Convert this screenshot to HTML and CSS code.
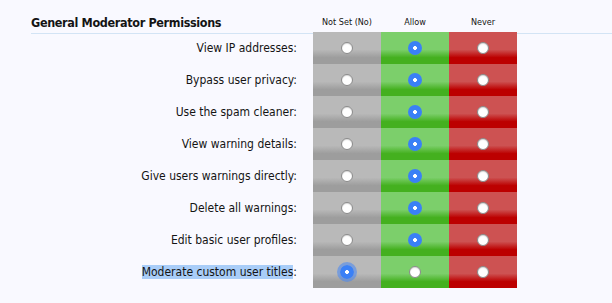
FILE: index.html
```html
<!DOCTYPE html>
<html lang="en">
<head>
    <meta charset="UTF-8">
    <title>General Moderator Permissions</title>
    <link rel="stylesheet" href="styles.css">
</head>
<body>
    <div class="perm-block">
        <div class="perm-grid">
            <h3 class="perm-title">General Moderator Permissions</h3>
            <div class="col-head">Not Set (No)</div>
            <div class="col-head">Allow</div>
            <div class="col-head">Never</div>
            <div class="head-fill"></div>

            <label class="perm-label">View IP addresses:</label>
            <div class="cell unset"><input type="radio" name="p1"></div>
            <div class="cell allow"><input type="radio" name="p1" checked></div>
            <div class="cell never"><input type="radio" name="p1"></div>
            <div></div>

            <label class="perm-label">Bypass user privacy:</label>
            <div class="cell unset"><input type="radio" name="p2"></div>
            <div class="cell allow"><input type="radio" name="p2" checked></div>
            <div class="cell never"><input type="radio" name="p2"></div>
            <div></div>

            <label class="perm-label">Use the spam cleaner:</label>
            <div class="cell unset"><input type="radio" name="p3"></div>
            <div class="cell allow"><input type="radio" name="p3" checked></div>
            <div class="cell never"><input type="radio" name="p3"></div>
            <div></div>

            <label class="perm-label">View warning details:</label>
            <div class="cell unset"><input type="radio" name="p4"></div>
            <div class="cell allow"><input type="radio" name="p4" checked></div>
            <div class="cell never"><input type="radio" name="p4"></div>
            <div></div>

            <label class="perm-label">Give users warnings directly:</label>
            <div class="cell unset"><input type="radio" name="p5"></div>
            <div class="cell allow"><input type="radio" name="p5" checked></div>
            <div class="cell never"><input type="radio" name="p5"></div>
            <div></div>

            <label class="perm-label">Delete all warnings:</label>
            <div class="cell unset"><input type="radio" name="p6"></div>
            <div class="cell allow"><input type="radio" name="p6" checked></div>
            <div class="cell never"><input type="radio" name="p6"></div>
            <div></div>

            <label class="perm-label">Edit basic user profiles:</label>
            <div class="cell unset"><input type="radio" name="p7"></div>
            <div class="cell allow"><input type="radio" name="p7" checked></div>
            <div class="cell never"><input type="radio" name="p7"></div>
            <div></div>

            <label class="perm-label"><span class="selected">Moderate custom user titles</span>:</label>
            <div class="cell unset"><input type="radio" name="p8" class="focused" checked></div>
            <div class="cell allow"><input type="radio" name="p8"></div>
            <div class="cell never"><input type="radio" name="p8"></div>
            <div></div>
        </div>
    </div>
</body>
</html>
```

FILE: styles.css
```css
* {
    margin: 0;
    padding: 0;
    box-sizing: border-box;
}

body {
    background-color: #f9f9ff;
    color: #141414;
    font-family: 'DejaVu Sans Condensed', 'DejaVu Sans', Tahoma, sans-serif;
    font-stretch: condensed;
    padding-left: 31px;
}

.perm-grid {
    display: grid;
    grid-template-columns: 282px 68px 68px 68px 1fr;
    grid-auto-rows: 32px;
}

.perm-title,
.col-head,
.head-fill {
    height: 34px;
    border-bottom: 1px solid #d3e4f5;
}

.perm-title {
    font-size: 12.5px;
    font-weight: bold;
    letter-spacing: -0.35px;
    padding-top: 15px;
    white-space: nowrap;
}

.col-head {
    font-size: 9px;
    text-align: center;
    padding-top: 17px;
}

.perm-label {
    font-size: 12px;
    text-align: right;
    padding-right: 16px;
    display: flex;
    align-items: center;
    justify-content: flex-end;
    white-space: nowrap;
}

.selected {
    background-color: #a9cdf8;
    line-height: 14px;
}

.cell {
    display: flex;
    align-items: center;
    justify-content: center;
}

.unset {
    background: linear-gradient(#b9b9b9 0%, #b9b9b9 55%, #9d9d9d 80%, #9d9d9d 100%);
}

.allow {
    background: linear-gradient(#7ccf6b 0%, #7ccf6b 55%, #44b01f 80%, #44b01f 100%);
}

.never {
    background: linear-gradient(#cd5252 0%, #cd5252 55%, #bc0000 80%, #bc0000 100%);
}

input[type="radio"] {
    appearance: none;
    width: 12px;
    height: 12px;
    border-radius: 50%;
    background-color: #fff;
    border: 1px solid #8a8a8a;
    box-shadow: inset 0 1px 1px rgba(0, 0, 0, 0.15);
    margin-top: -1px;
}

input[type="radio"]:checked {
    width: 14px;
    height: 14px;
    border: none;
    box-shadow: none;
    background: radial-gradient(circle, #fff 0, #fff 1.6px, #3a80f6 2.2px);
}

input[type="radio"].focused {
    box-shadow: 0 0 0 3px rgba(70, 135, 245, 0.55);
}
```
